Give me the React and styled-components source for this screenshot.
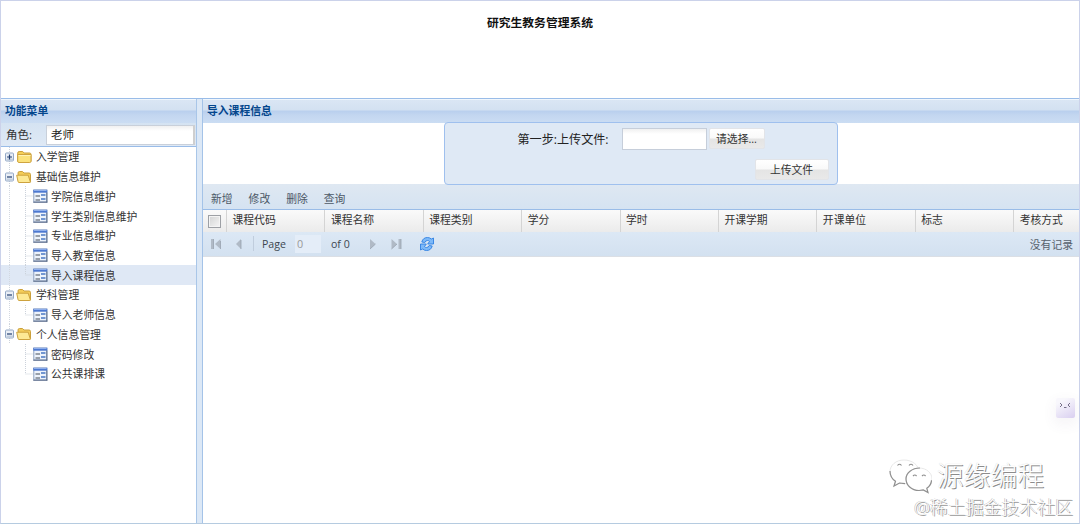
import React from 'react';
import styled, { createGlobalStyle } from 'styled-components';

const GlobalStyle = createGlobalStyle`
  * {
    box-sizing: border-box;
  }
  body {
    margin: 0;
    overflow: hidden;
    background: #fff;
    font-family: "Open Sans", "Noto Sans CJK SC", sans-serif;
    font-size: 10.8px;
    color: #333;
  }
  input, button {
    font-family: inherit;
  }
`

const Page = styled.div`
  position: relative;
  display: flex;
  flex-direction: column;
  width: 1080px;
  height: 524px;
  border: 1px solid #cbd2ea;
  border-bottom-color: #b5cbe0;
`

const Title = styled.h1`
  height: 97px;
  margin: 0;
  padding-top: 12px;
  font-size: 11.8px;
  line-height: 18px;
  font-weight: 700;
  text-align: center;
  color: #111;
`

const Body = styled.div`
  display: flex;
  flex: 1;
  min-height: 0;
  border-top: 1px solid #99bce8;
`

const Sidebar = styled.div`
  width: 196px;
  border-right: 1px solid #a9c6e8;
`

const Splitter = styled.div`
  width: 5px;
  background: #dce8f6;
`

const Main = styled.div`
  flex: 1;
  min-width: 0;
  border-left: 1px solid #a4c3e8;
`

const PanelHeader = styled.div`
  height: 24px;
  padding-left: 4px;
  line-height: 21px;
  font-weight: 700;
  color: #04468c;
  border-top: 1px solid #f0f6fc;
  background: linear-gradient(#dae6f4 0, #d3e1f1 10px, #b9cfee 11px, #c3d6f0 15px, #cbddf3 100%);
`

const RoleRow = styled.div`
  display: flex;
  align-items: center;
  height: 24px;
  padding-left: 5px;
  font-size: 11.5px;
  background: linear-gradient(#d5e3f2, #dfe9f5);
  border-bottom: 1px solid #99bce8;
`

const RoleLabel = styled.label`
  width: 40px;
  padding-bottom: 1px;
`

const RoleInput = styled.input`
  width: 149px;
  height: 20px;
  padding: 0 4px 1px;
  border: 1px solid #c9d0da;
  border-right: 2px solid #cfcfcf;
  font-size: 11.5px;
  color: #222;
  background: linear-gradient(#f1f1f1, #fff 5px);
  outline: none;
`

const Tree = styled.div`
  display: flex;
  flex-direction: column;
`

const TreeRow = styled.div`
  display: flex;
  align-items: center;
  height: 19.72px;
  padding-left: 3px;
  line-height: 19px;
  white-space: nowrap;
  background: ${props => props.$selected ? '#dfe8f5' : 'transparent'};
`

const TreeText = styled.span`
  margin-left: 3px;
`

const UploadArea = styled.div`
  display: flex;
  justify-content: center;
  height: 61px;
  padding-right: 1px;
`

const UploadBox = styled.div`
  width: 394px;
  height: 63px;
  margin-top: -1px;
  border: 1px solid #9fc0ee;
  border-radius: 4px;
  background: #dfe9f5;
`

const FileRow = styled.div`
  display: flex;
  align-items: center;
  height: 29px;
  padding: 2px 0 0 73px;
`

const FileLabel = styled.label`
  width: 104px;
  font-size: 12.1px;
  color: #222;
`

const FileInput = styled.input`
  width: 85px;
  height: 22px;
  border: 1px solid #c6ceda;
  background: linear-gradient(#f0f0f0, #fff 5px);
  outline: none;
`

const Button = styled.button`
  display: flex;
  align-items: center;
  justify-content: center;
  width: ${props => props.$width}px;
  height: 21px;
  margin-left: 2px;
  padding: 0 0 2px;
  border: 1px solid #e2e4e8;
  border-radius: 2px;
  font-size: 10.8px;
  color: #333;
  background: linear-gradient(#fff 0, #f9f9f9 48%, #e4e4e4 52%, #e9e9e9 100%);
`

const SubmitRow = styled.div`
  display: flex;
  justify-content: flex-end;
  padding: 7px 8px 0 0;
`

const Toolbar = styled.div`
  display: flex;
  align-items: center;
  gap: 16px;
  height: 26px;
  padding: 2px 0 0 8px;
  color: #4c5866;
  background: linear-gradient(#dfe8f2, #d5e3f2);
  border-bottom: 1px solid #99bce8;
`

const GridHead = styled.div`
  display: grid;
  grid-template-columns: 24px repeat(8, 98.4px) 1fr;
  height: 22px;
  background: linear-gradient(#fafafa, #ebebeb);
`

const HeadCell = styled.div`
  padding-left: 5.5px;
  line-height: 20px;
  white-space: nowrap;
  border-right: ${props => props.$last ? 'none' : '1px solid #d4d4d4'};
`

const CheckCell = styled(HeadCell)`
  padding-left: 5px;
`

const CheckBox = styled.div`
  width: 13px;
  height: 13px;
  margin-top: 5px;
  border: 1px solid #9da0a5;
  background: linear-gradient(135deg, #d2d3d4, #f6f6f6);
  box-shadow: inset 0 0 0 1px #f4f4f4;
`

const Pager = styled.div`
  display: flex;
  align-items: center;
  height: 25px;
  padding: 0 6px 1px 7px;
  background: linear-gradient(#dce8f5, #d3e1f0);
  border-bottom: 1px solid #dbdfe5;
`

const PagerDivider = styled.i`
  width: 1px;
  height: 15px;
  margin: 0 8px 0 11px;
  background: #c0cddd;
`

const PageInput = styled.input`
  width: 26px;
  height: 18px;
  margin: 0 10px 0 9px;
  padding: 0 2px;
  border: 0;
  font-size: 10.8px;
  color: #999;
  background: #e4edf8;
`

const PagerText = styled.span`
  white-space: nowrap;
  font-size: 10.6px;
  color: #3c4650;
`

const EmptyText = styled.span`
  margin-left: auto;
  color: #56616d;
`

const Assistant = styled.div`
  position: absolute;
  top: 397px;
  right: 4px;
  width: 19px;
  height: 20px;
  border-radius: 2px;
  background: linear-gradient(150deg, #f8f7fc 20%, #d9cff0);
  box-shadow: 0 5px 12px 3px rgba(90, 80, 120, 0.05);
`

const Watermark = styled.div`
  position: absolute;
  right: 35px;
  bottom: 29px;
  display: flex;
  align-items: center;
  gap: 5px;
  font-size: 26.8px;
  line-height: 36px;
  font-weight: 300;
  color: #fff;
  text-shadow: 1px 1px 0 #8c8c8c, 0 0 1px #ccc;
`

const Credit = styled.div`
  position: absolute;
  right: 6px;
  bottom: 4px;
  font-size: 17.9px;
  line-height: 24px;
  font-weight: 300;
  color: #fff;
  text-shadow: 1px 1px 0 #999, -0.5px 0 0.5px #aaa;
`

const ICON_PAGER = '#b0bac6'

const ToggleIcon = ({ open }) => (
  <svg width="11" height="19.72" viewBox="0 0 11 19.72">
    <path d="M5.500 0v19.720" stroke="#cdd3dc" strokeDasharray="1 1" />
    <rect x="1.500" y="6" width="8" height="8" rx="1" fill="#e9eef6" stroke="#93a8c6" />
    <path d="M2.500 11.500h6.500v2H2.500z" fill="#c2cedf" />
    <path d={open ? 'M3 10h5' : 'M3 10h5M5.500 7.500v5'} stroke="#223f70" strokeWidth="1.200" />
  </svg>
)

const ClosedFolder = styled.svg`
  margin-left: 2px;
`

const OpenFolder = styled.svg`
  margin-left: 1px;
  margin-right: 1px;
`

const FolderIcon = ({ open }) => open ? (
  <OpenFolder width="16" height="14" viewBox="0 0 16 14">
    <path d="M2 3Q2 1.500 3.500 1.500h3L8 3h5q1.500 0 1.500 1.500v7.300q0 .7-1 .7H3z" fill="#f3cc58" stroke="#cba03c" />
    <path d="M.7 5.200h11.500l2 6.300q.2 1-.8 1H3.200Q2.300 12.500 2 11.500z" fill="#fde994" stroke="#cda23e" />
  </OpenFolder>
) : (
  <ClosedFolder width="16" height="14" viewBox="0 0 16 14">
    <path d="M.7 3.200Q.7 1.500 2.200 1.500h3.500L7.200 3h5.500Q14 3 14 4.500v7H.7z" fill="#f5cf58" stroke="#cba03c" />
    <path d="M.7 4.500H14v6.800q0 1.200-1.200 1.200H1.900q-1.200 0-1.200-1.200z" fill="#fbe27c" stroke="#cfa440" />
    <path d="M1.500 5.500h12" stroke="#fff3b5" />
  </ClosedFolder>
)

const Branch = styled.svg`
  margin-left: 2px;
`

const BranchLine = ({ last, groupEnd }) => (
  <Branch width="27" height="19.72" viewBox="0 0 27 19.72">
    {!groupEnd && <path d="M3.500 0v19.720" stroke="#d3d8e0" strokeDasharray="1 1" />}
    <path d={last ? 'M19.500 0v10h7' : 'M19.500 0v19.720M19.500 10h7'} fill="none" stroke="#cbd1da" strokeDasharray="1 1" />
  </Branch>
)

const FormIcon = () => (
  <svg width="15" height="14" viewBox="0 0 15 14">
    <rect x=".8" y="1" width="13" height="12" fill="#edf3fb" stroke="#8b9fbe" />
    <path d="M.3 .8h14v2.900H.3z" fill="#4c78d0" />
    <path d="M1 1.500h12.500" stroke="#91b0ec" />
    <path d="M2.500 7h4.500M2.500 11h4.500" stroke="#454d59" strokeWidth="1.200" />
    <path d="M8 6h4.500M8 10h4.500" stroke="#4a78c4" strokeWidth="1.500" />
    <path d="M.3 13.200h14M13.900 3.500v10" stroke="#5a6b88" />
  </svg>
)

const FirstIcon = () => (
  <svg width="12" height="12" viewBox="0 0 12 12">
    <path d="M1 1h2.500v10H1zM10.500 1v10L5 6z" fill={ICON_PAGER} />
    <path d="M3.500 1v10M10.500 3v8" stroke="#98a2ae" strokeWidth=".8" />
  </svg>
)

const PrevSvg = styled.svg`
  margin-left: 13px;
`

const PrevIcon = () => (
  <PrevSvg width="7" height="12" viewBox="0 0 7 12">
    <path d="M6 1v10L1 6z" fill={ICON_PAGER} />
    <path d="M6 2v9" stroke="#98a2ae" strokeWidth=".8" />
  </PrevSvg>
)

const NextSvg = styled.svg`
  margin-left: 19px;
`

const NextIcon = () => (
  <NextSvg width="7" height="12" viewBox="0 0 7 12">
    <path d="M1 1v10l5.500-5z" fill={ICON_PAGER} />
    <path d="M1 11l5.500-5" stroke="#98a2ae" strokeWidth=".8" />
  </NextSvg>
)

const LastSvg = styled.svg`
  margin-left: 14px;
`

const LastIcon = () => (
  <LastSvg width="12" height="12" viewBox="0 0 12 12">
    <path d="M8.500 1H11v10H8.500zM1.500 1v10L7 6z" fill={ICON_PAGER} />
    <path d="M11 1v10M1.500 11L7 6" stroke="#98a2ae" strokeWidth=".8" />
  </LastSvg>
)

const RefreshSvg = styled.svg`
  margin-left: 17px;
`

const RefreshIcon = () => (
  <RefreshSvg width="16" height="16" viewBox="0 0 16 16">
    <g fill="#7db9f8" stroke="#2f80e2" strokeWidth=".9" strokeLinejoin="round">
      <path d="M2.800 6Q4 1.500 8.500 1.500q2.300 0 3.800 1.500l2.200-1v6H8.700l1.800-2.500Q9.800 4.500 8.500 4.500 6.500 4.500 5.800 6.500z" />
      <path d="M13.200 10Q12 14.500 7.500 14.500q-2.300 0-3.800-1.500l-2.200 1V8h5.800l-1.800 2.500q.7 1 2 1 2 0 2.700-2z" />
    </g>
  </RefreshSvg>
)

const WechatIcon = () => (
  <svg width="44" height="36" viewBox="0 0 44 36">
    <g fill="#fff" stroke="#e2e2e2" strokeWidth=".8">
      <path d="M16 2C8 2 2 7 2 14c0 4 2 7 5.500 9.300L6 28l5.500-3c1.500.5 3 .7 4.500.7C24 25.700 31 21 31 14S24 2 16 2z" />
      <path d="M31 10c-7.500 0-13 5-13 11s5.500 11.500 13 11.500c1.500 0 3-.2 4.300-.6L40 34.500l-1.200-4.200C42 28 44 25 44 21c0-6-5.500-11-13-11z" />
    </g>
    <g fill="none" stroke="#909090" strokeWidth="1.200">
      <path d="M2 13c0 4.500 2 8 5.500 10.300L6 28l5.500-3 5.500.7" />
      <path d="M32 10c-8 0-14 5-14 11s5.500 11.500 13 11.500l4.300-.6 4.700 2.600-1.200-4.200q4.500-3.300 4.700-8" />
      <path d="M9.500 7.500q2-2.500 4 0M21 7.500q2-2.500 4 0M25 18q1.800-2 3.600 0M34 18q1.800-2 3.600 0" />
    </g>
  </svg>
)

const menu = [
  { text: '入学管理', children: [] },
  { text: '基础信息维护', children: ['学院信息维护', '学生类别信息维护', '专业信息维护', '导入教室信息', '导入课程信息'] },
  { text: '学科管理', children: ['导入老师信息'] },
  { text: '个人信息管理', children: ['密码修改', '公共课排课'] },
]

const columns = ['课程代码', '课程名称', '课程类别', '学分', '学时', '开课学期', '开课单位', '标志', '考核方式']

const MenuGroup = ({ text, items, groupEnd }) => (
  <>
    <TreeRow>
      <ToggleIcon open={items.length > 0} />
      <FolderIcon open={items.length > 0} />
      <TreeText>{text}</TreeText>
    </TreeRow>
    {items.map((item, i) => (
      <TreeRow key={item} $selected={item === '导入课程信息'}>
        <BranchLine last={i === items.length - 1} groupEnd={groupEnd} />
        <FormIcon />
        <TreeText>{item}</TreeText>
      </TreeRow>
    ))}
  </>
)

const App = () => {
  return (
    <>
      <GlobalStyle />
      <Page>
        <Title>研究生教务管理系统</Title>
        <Body>
          <Sidebar>
            <PanelHeader>功能菜单</PanelHeader>
            <RoleRow>
              <RoleLabel>角色:</RoleLabel>
              <RoleInput defaultValue="老师" />
            </RoleRow>
            <Tree>
              {menu.map((group, i) => (
                <MenuGroup key={group.text} text={group.text} items={group.children} groupEnd={i === menu.length - 1} />
              ))}
            </Tree>
          </Sidebar>
          <Splitter />
          <Main>
            <PanelHeader>导入课程信息</PanelHeader>
            <UploadArea>
              <UploadBox>
                <FileRow>
                  <FileLabel>第一步:上传文件:</FileLabel>
                  <FileInput />
                  <Button $width={56}>请选择...</Button>
                </FileRow>
                <SubmitRow>
                  <Button $width={74}>上传文件</Button>
                </SubmitRow>
              </UploadBox>
            </UploadArea>
            <Toolbar>
              <span>新增</span>
              <span>修改</span>
              <span>删除</span>
              <span>查询</span>
            </Toolbar>
            <GridHead>
              <CheckCell><CheckBox /></CheckCell>
              {columns.map((name, i) => (
                <HeadCell key={name} $last={i === columns.length - 1}>{name}</HeadCell>
              ))}
            </GridHead>
            <Pager>
              <FirstIcon />
              <PrevIcon />
              <PagerDivider />
              <PagerText>Page</PagerText>
              <PageInput defaultValue="0" />
              <PagerText>of 0</PagerText>
              <NextIcon />
              <LastIcon />
              <RefreshIcon />
              <EmptyText>没有记录</EmptyText>
            </Pager>
          </Main>
        </Body>
        <Assistant>
          <svg width="19" height="20" viewBox="0 0 19 20">
            <path d="M4 5l2 2-2 2M14 5l-2 2 2 2M8 9.500h2.500" fill="none" stroke="#77718a" />
          </svg>
        </Assistant>
        <Watermark>
          <WechatIcon />
          <span>源缘编程</span>
        </Watermark>
        <Credit>@稀土掘金技术社区</Credit>
      </Page>
    </>
  )
}

export default App;
